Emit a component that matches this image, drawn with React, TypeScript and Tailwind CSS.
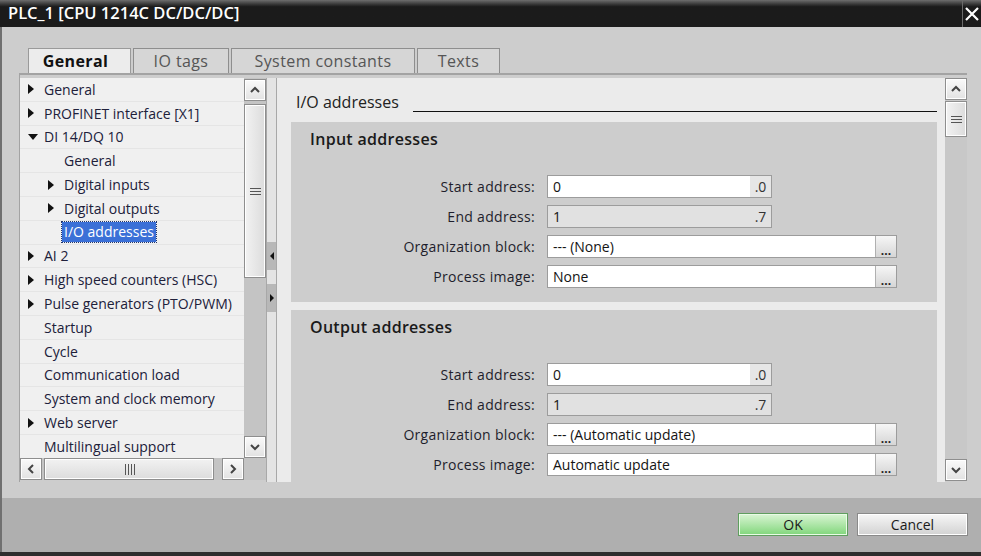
import React from "react";

type TreeItem = { label: string; level: number; arrow?: "right" | "down"; selected?: boolean };

const tree: TreeItem[] = [
  { label: "General", level: 0, arrow: "right" },
  { label: "PROFINET interface [X1]", level: 0, arrow: "right" },
  { label: "DI 14/DQ 10", level: 0, arrow: "down" },
  { label: "General", level: 1 },
  { label: "Digital inputs", level: 1, arrow: "right" },
  { label: "Digital outputs", level: 1, arrow: "right" },
  { label: "I/O addresses", level: 1, selected: true },
  { label: "AI 2", level: 0, arrow: "right" },
  { label: "High speed counters (HSC)", level: 0, arrow: "right" },
  { label: "Pulse generators (PTO/PWM)", level: 0, arrow: "right" },
  { label: "Startup", level: 0 },
  { label: "Cycle", level: 0 },
  { label: "Communication load", level: 0 },
  { label: "System and clock memory", level: 0 },
  { label: "Web server", level: 0, arrow: "right" },
  { label: "Multilingual support", level: 0 },
];

function Arrow({ dir }: { dir?: "right" | "down" }) {
  if (dir === "right")
    return (
      <svg width="6" height="10" viewBox="0 0 6 10">
        <path d="M0 0L6 5L0 10Z" fill="#111" />
      </svg>
    );
  if (dir === "down")
    return (
      <svg width="10" height="6" viewBox="0 0 10 6">
        <path d="M0 0H10L5 6Z" fill="#111" />
      </svg>
    );
  return null;
}

function Chevron({ dir }: { dir: "up" | "down" | "left" | "right" }) {
  const d = {
    up: "M2 8L6 4L10 8",
    down: "M2 4L6 8L10 4",
    left: "M8 2L4 6L8 10",
    right: "M4 2L8 6L4 10",
  }[dir];
  return (
    <svg width="12" height="12" viewBox="0 0 12 12">
      <path d={d} fill="none" stroke="#444" strokeWidth="2" />
    </svg>
  );
}

function ScrollBtn({ dir }: { dir: "up" | "down" | "left" | "right" }) {
  return (
    <div className="flex h-[22px] w-[22px] shrink-0 items-center justify-center border border-[#8e8e8e] bg-gradient-to-b from-[#fafafa] to-[#e2e2e2] shadow-[inset_0_0_0_1px_#ffffff]">
      <Chevron dir={dir} />
    </div>
  );
}

function Grip({ vertical }: { vertical: boolean }) {
  return vertical ? (
    <svg width="11" height="9" viewBox="0 0 11 9">
      <path d="M0 1.5H11M0 4.5H11M0 7.5H11" stroke="#555" strokeWidth="1" />
    </svg>
  ) : (
    <svg width="11" height="11" viewBox="0 0 11 11">
      <path d="M1.5 0V11M4.5 0V11M7.5 0V11M10.5 0V11" stroke="#555" strokeWidth="1" />
    </svg>
  );
}

function Field({
  label,
  value,
  suffix,
  disabled,
  wide,
}: {
  label: string;
  value: string;
  suffix?: string;
  disabled?: boolean;
  wide?: boolean;
}) {
  return (
    <div className="flex h-[30px] items-center">
      <div className="w-[244px] text-right text-[14px] tracking-[0.3px] text-[#1e1e2c]">{label}</div>
      <div
        className={`ml-[12px] flex h-[23px] items-stretch border border-[#9c9c9c] ${
          wide ? "w-[350px]" : "w-[225px]"
        } ${disabled ? "bg-[#e1e1e1]" : "bg-white"}`}
      >
        <div className="flex flex-1 items-center pl-[5px] text-[14px] text-[#141414]">{value}</div>
        {suffix && (
          <div
            className={`flex w-[21px] items-center justify-center text-[14px] text-[#333] ${
              disabled ? "" : "bg-[#e6e6e6]"
            }`}
          >
            {suffix}
          </div>
        )}
        {wide && (
          <div className="flex w-[21px] items-end justify-center border-l border-[#b0b0b0] bg-gradient-to-b from-[#f6f6f6] to-[#d6d6d6] pb-[1px] text-[12px] font-bold leading-[10px] text-[#222]">
            ...
          </div>
        )}
      </div>
    </div>
  );
}

function Section({ title, ob, pi }: { title: string; ob: string; pi: string }) {
  return (
    <div className="ml-[14px] mr-[8px] h-[180px] shrink-0 bg-[#cdcdcd]">
      <div className="flex h-[34px] items-center pl-[19px] text-[16px] font-semibold tracking-[0.3px] text-[#1a1a1a]">
        {title}
      </div>
      <div className="mt-[15px]">
        <Field label="Start address:" value="0" suffix=".0" />
        <Field label="End address:" value="1" suffix=".7" disabled />
        <Field label="Organization block:" value={ob} wide />
        <Field label="Process image:" value={pi} wide />
      </div>
    </div>
  );
}

export default function App() {
  const tabs = [
    { label: "General", w: "w-[103px]", active: true },
    { label: "IO tags", w: "w-[96px]" },
    { label: "System constants", w: "w-[184px]" },
    { label: "Texts", w: "w-[83px]" },
  ];
  return (
    <div className="flex h-[556px] w-[981px] flex-col overflow-hidden bg-[#cdcdcd] font-['Open_Sans','Liberation_Sans',sans-serif]">
      {/* title bar */}
      <div className="flex h-[27px] shrink-0 items-stretch bg-gradient-to-b from-[#6e6e6e] via-[#1b1b1b] via-[25%] to-[#1b1b1b]">
        <div className="flex flex-1 items-center pl-[8px] text-[16.5px] font-semibold text-white">
          PLC_1 [CPU 1214C DC/DC/DC]
        </div>
        <div className="flex w-[19px] items-center justify-center border-l border-[#6a6a6a]">
          <svg width="14" height="14" viewBox="0 0 14 14">
            <path d="M1 1L13 13M13 1L1 13" stroke="#fff" strokeWidth="2.2" />
          </svg>
        </div>
      </div>

      <div className="flex flex-1 flex-col border-l-2 border-[#707070]">
        {/* tabs */}
        <div className="mt-[21px] flex h-[25px] shrink-0 items-stretch gap-[2px] pl-[26px]">
          {tabs.map((t) => (
            <div
              key={t.label}
              className={`${t.w} flex items-center justify-center border border-b-0 text-[16px] tracking-[0.4px] ${
                t.active
                  ? "border-[#9a9a9a] bg-[#ececec] pr-[8px] font-bold text-[#111]"
                  : "border-[#8e8e8e] bg-[#d6d6d6] text-[#555]"
              }`}
            >
              {t.label}
            </div>
          ))}
        </div>

        {/* frame */}
        <div className="ml-[17px] flex h-[409px] w-[948px] shrink-0 border-l border-t-2 border-[#a3a3a3] pt-[3px]">
          {/* tree column */}
          <div className="flex w-[246px] flex-col">
            <div className="flex h-[380px]">
              <div className="w-[224px] bg-[#f0f0f0] text-[14px] text-[#20203a]">
                {tree.map((it, i) => (
                  <div key={i} className="flex h-[23.8px] items-center border-b border-[#e5e5e5]">
                    <div className={it.level === 0 ? "w-[8px]" : "w-[28px]"} />
                    <div className="flex w-[16px] items-center">
                      <Arrow dir={it.arrow} />
                    </div>
                    <span
                      className={
                        it.selected
                          ? "-ml-[2px] bg-[#3b70d7] px-[2px] leading-[20px] text-white outline-1 outline-dotted outline-[#20336b]"
                          : "whitespace-nowrap"
                      }
                    >
                      {it.label}
                    </span>
                  </div>
                ))}
              </div>
              <div className="flex w-[22px] flex-col bg-[#c4c4c4] pt-px">
                <ScrollBtn dir="up" />
                <div className="mt-[3px] flex h-[174px] items-center justify-center border border-[#8e8e8e] bg-gradient-to-r from-[#f2f2f2] to-[#dcdcdc] shadow-[inset_0_0_0_1px_#ffffff]">
                  <Grip vertical />
                </div>
                <div className="flex-1" />
                <ScrollBtn dir="down" />
              </div>
            </div>
            <div className="flex h-[22px]">
              <div className="flex w-[224px] items-stretch bg-[#c4c4c4]">
                <ScrollBtn dir="left" />
                <div className="ml-[2px] flex w-[170px] items-center justify-center border border-[#8e8e8e] bg-gradient-to-b from-[#f2f2f2] to-[#dcdcdc] shadow-[inset_0_0_0_1px_#ffffff]">
                  <Grip vertical={false} />
                </div>
                <div className="flex-1" />
                <ScrollBtn dir="right" />
              </div>
              <div className="w-[22px] bg-[#c4c4c4]" />
            </div>
          </div>

          {/* splitter */}
          <div className="flex w-[11px] flex-col border-x border-[#a8a8a8] bg-[#e4e4e4] pt-[164px]">
            <div className="flex h-[28px] items-center justify-center bg-[#b8b8b8]">
              <svg width="4" height="8" viewBox="0 0 4 8">
                <path d="M4 0V8L0 4Z" fill="#111" />
              </svg>
            </div>
            <div className="mt-[14px] flex h-[28px] items-center justify-center bg-[#b8b8b8]">
              <svg width="4" height="8" viewBox="0 0 4 8">
                <path d="M0 0V8L4 4Z" fill="#111" />
              </svg>
            </div>
          </div>

          {/* right panel */}
          <div className="flex h-[404px] w-[668px] flex-col overflow-hidden bg-[#ebebeb]">
            <div className="flex h-[44px] shrink-0 items-start pt-[15px]">
              <div className="pl-[19px] text-[16px] leading-[18px] text-[#222]">I/O addresses</div>
              <div className="ml-[14px] mr-[8px] mt-[18px] h-px flex-1 bg-[#111]" />
            </div>
            <Section title="Input addresses" ob="--- (None)" pi="None" />
            <div className="h-[8px] shrink-0" />
            <Section title="Output addresses" ob="--- (Automatic update)" pi="Automatic update" />
          </div>

          {/* right scrollbar */}
          <div className="flex h-[403px] w-[22px] flex-col bg-[#c8c8c8]">
            <ScrollBtn dir="up" />
            <div className="mt-px flex h-[36px] items-center justify-center border border-[#8e8e8e] bg-gradient-to-r from-[#f2f2f2] to-[#dcdcdc] shadow-[inset_0_0_0_1px_#ffffff]">
              <Grip vertical />
            </div>
            <div className="flex-1" />
            <ScrollBtn dir="down" />
          </div>
        </div>

        <div className="h-[16px] shrink-0" />

        {/* button bar */}
        <div className="flex h-[54px] shrink-0 items-start justify-end gap-[9px] bg-[#afafaf] pr-[13px] pt-[15px]">
          <div className="flex h-[23px] w-[110px] items-center justify-center border border-[#5f9e5f] bg-gradient-to-b from-[#d9f5d4] to-[#7fd67a] text-[14px] text-[#1a1a1a] shadow-[inset_0_0_0_1px_#e9fbe6]">
            OK
          </div>
          <div className="flex h-[23px] w-[111px] items-center justify-center border border-[#8a8a8a] bg-gradient-to-b from-[#f7f7f7] to-[#d2d2d2] text-[14px] text-[#1a1a1a] shadow-[inset_0_0_0_1px_#ffffff]">
            Cancel
          </div>
        </div>
      </div>
      <div className="h-[4px] shrink-0 bg-[#2e2e2e]" />
    </div>
  );
}
